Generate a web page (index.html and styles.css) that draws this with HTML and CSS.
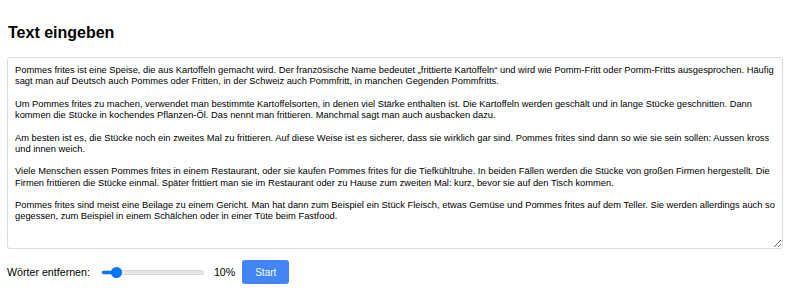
FILE: index.html
```html
<!DOCTYPE html>
<html lang="de">
<head>
    <meta charset="UTF-8">
    <meta name="viewport" content="width=device-width, initial-scale=1.0">
    <title>Text eingeben</title>
    <link rel="stylesheet" href="styles.css">
</head>
<body>
<div class="container">
    <h2>Text eingeben</h2>
    <textarea id="inputText" class="text-input">Pommes frites ist eine Speise, die aus Kartoffeln gemacht wird. Der französische Name bedeutet „frittierte Kartoffeln“ und wird wie Pomm-Fritt oder Pomm-Fritts ausgesprochen. Häufig sagt man auf Deutsch auch Pommes oder Fritten, in der Schweiz auch Pommfritt, in manchen Gegenden Pommfritts.

Um Pommes frites zu machen, verwendet man bestimmte Kartoffelsorten, in denen viel Stärke enthalten ist. Die Kartoffeln werden geschält und in lange Stücke geschnitten. Dann kommen die Stücke in kochendes Pflanzen-Öl. Das nennt man frittieren. Manchmal sagt man auch ausbacken dazu.

Am besten ist es, die Stücke noch ein zweites Mal zu frittieren. Auf diese Weise ist es sicherer, dass sie wirklich gar sind. Pommes frites sind dann so wie sie sein sollen: Aussen kross und innen weich.

Viele Menschen essen Pommes frites in einem Restaurant, oder sie kaufen Pommes frites für die Tiefkühltruhe. In beiden Fällen werden die Stücke von großen Firmen hergestellt. Die Firmen frittieren die Stücke einmal. Später frittiert man sie im Restaurant oder zu Hause zum zweiten Mal: kurz, bevor sie auf den Tisch kommen.

Pommes frites sind meist eine Beilage zu einem Gericht. Man hat dann zum Beispiel ein Stück Fleisch, etwas Gemüse und Pommes frites auf dem Teller. Sie werden allerdings auch so gegessen, zum Beispiel in einem Schälchen oder in einer Tüte beim Fastfood.</textarea>

    <div class="controls">
        <label for="removeRange">Wörter entfernen:</label>
        <input type="range" id="removeRange" class="range" min="0" max="100" value="10">
        <span id="rangeValue" class="range-value">10%</span>
        <button class="start-button">Start</button>
    </div>
</div>
</body>
</html>
```

FILE: styles.css
```css
body {
    font-family: "Liberation Sans", Arial, sans-serif;
    color: #000;
    margin: 0;
    padding: 0 8px 0 7px;
    background-color: #fff;
}

h2 {
    font-size: 16px;
    line-height: 18px;
    margin: 24px 0 15px 1px;
    color: #000;
}

.text-input {
    display: block;
    width: 100%;
    height: 192px;
    box-sizing: border-box;
    padding: 7px 7px;
    font-family: "Liberation Sans", Arial, sans-serif;
    font-size: 9.33px;
    line-height: 11.25px;
    color: #000;
    border: 1px solid #dcdcdc;
    border-radius: 3px;
    resize: vertical;
    outline: none;
}

.controls {
    display: flex;
    align-items: center;
    height: 24px;
    margin-top: 11px;
    font-size: 10.67px;
    color: #000;
}

.range {
    -webkit-appearance: none;
    appearance: none;
    width: 103px;
    height: 5px;
    margin: 0 10px 0 11px;
    border-radius: 3px;
    background: linear-gradient(to right, #0075ff 0, #0075ff 16%, #e6e6e6 16%, #e6e6e6 100%);
    border: 1px solid #d6d6d6;
    box-sizing: border-box;
}

.range::-webkit-slider-thumb {
    -webkit-appearance: none;
    appearance: none;
    width: 11px;
    height: 11px;
    border-radius: 50%;
    background: #0075ff;
    border: none;
}

.start-button {
    margin-left: 7px;
    width: 47px;
    height: 24px;
    background-color: #4285f4;
    color: #fff;
    border: none;
    border-radius: 3px;
    font-family: "Liberation Sans", Arial, sans-serif;
    font-size: 10px;
    cursor: pointer;
}
```
